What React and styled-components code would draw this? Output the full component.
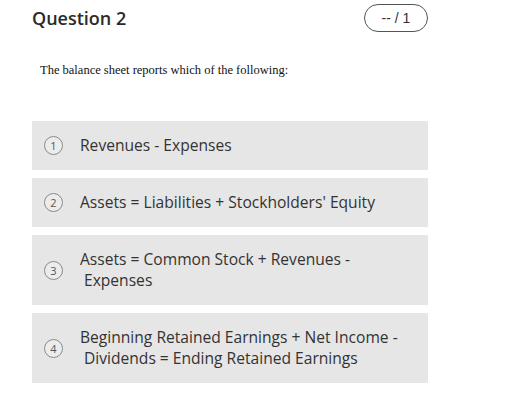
import React from 'react';
import styled, { createGlobalStyle } from 'styled-components';

const GlobalStyle = createGlobalStyle`
  body {
    margin: 0;
    background: #ffffff;
    font-family: 'Open Sans', sans-serif;
    color: #333333;
  }
`;

const Page = styled.div`
  width: 396px;
  padding: 4px 0 0 32px;
`;

const Header = styled.div`
  display: flex;
  justify-content: space-between;
  align-items: center;
  height: 28px;
`;

const Title = styled.h2`
  margin: 0;
  font-size: 18px;
  font-weight: 600;
  color: #2a2a2a;
`;

const Score = styled.div`
  width: 62px;
  height: 26px;
  border: 1px solid #555555;
  border-radius: 14px;
  display: flex;
  align-items: center;
  justify-content: center;
  font-family: 'Liberation Sans', Arial, sans-serif;
  font-size: 14px;
  color: #333333;
`;

const Prompt = styled.p`
  margin: 31px 0 0 8px;
  font-family: 'Liberation Serif', 'Times New Roman', serif;
  font-size: 12.5px;
  color: #111111;
`;

const Options = styled.div`
  display: flex;
  flex-direction: column;
  gap: 8px;
  margin-top: 43px;
`;

const Option = styled.div`
  display: flex;
  align-items: center;
  gap: 17px;
  height: ${props => (props.tall ? '70px' : '49px')};
  padding-left: 12px;
  background: #e6e6e6;
  font-size: 15.6px;
  line-height: 21px;
  color: #333333;
`;

const Num = styled.span`
  flex: none;
  width: 17px;
  height: 17px;
  border: 1px solid #8a8a8a;
  border-radius: 50%;
  display: flex;
  align-items: center;
  justify-content: center;
  font-size: 11px;
  line-height: 1;
  color: #555555;
  background: #ececec;
`;

const Label = styled.div`
  display: flex;
  flex-direction: column;
`;

const Cont = styled.span`
  padding-left: 4px;
`;

const options = [
  { lines: ['Revenues - Expenses'] },
  { lines: ["Assets = Liabilities + Stockholders' Equity"] },
  { lines: ['Assets = Common Stock + Revenues -', 'Expenses'] },
  { lines: ['Beginning Retained Earnings + Net Income -', 'Dividends = Ending Retained Earnings'] },
];

export default function App() {
  return (
    <>
      <GlobalStyle />
      <Page>
        <Header>
          <Title>Question 2</Title>
          <Score>-- / 1</Score>
        </Header>
        <Prompt>The balance sheet reports which of the following:</Prompt>
        <Options>
          {options.map((o, i) => (
            <Option key={i} tall={o.lines.length > 1}>
              <Num>{i + 1}</Num>
              <Label>
                <span>{o.lines[0]}</span>
                {o.lines[1] && <Cont>{o.lines[1]}</Cont>}
              </Label>
            </Option>
          ))}
        </Options>
      </Page>
    </>
  );
}
